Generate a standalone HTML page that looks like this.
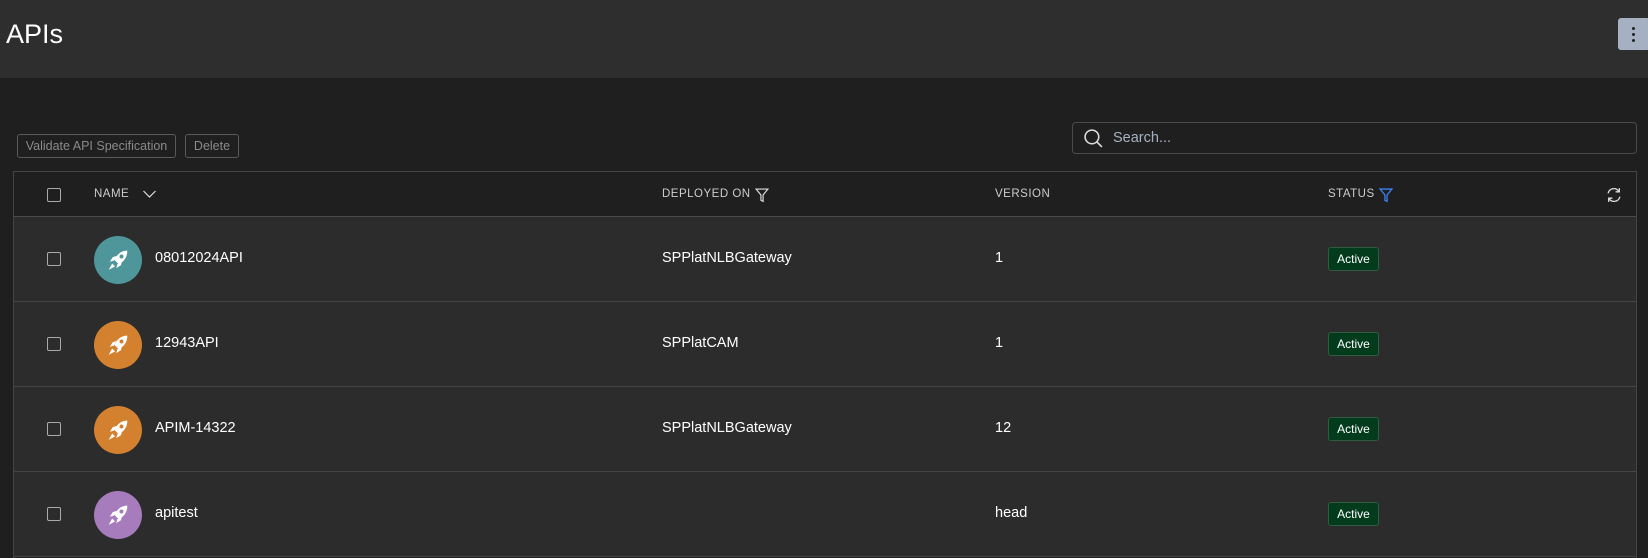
<!DOCTYPE html>
<html><head><style>
*{box-sizing:border-box;margin:0;padding:0}
html,body{width:1648px;height:558px;overflow:hidden}
body{background:#1f1f1f;font-family:"Liberation Sans","DejaVu Sans",sans-serif;color:#f0f0f0;position:relative}
.hdr{position:absolute;left:0;top:0;width:1648px;height:78px;background:#2e2e2e}
.hdr h1{position:absolute;left:6px;top:19px;font-size:27px;font-weight:400;color:#fff}
.kebab{position:absolute;left:1618px;top:18px;width:32px;height:32px;background:#a5b1c2;border-radius:3px}
.kebab i{position:absolute;left:14px;width:3px;height:3px;background:#222;border-radius:50%}
.btn{position:absolute;top:134px;height:24px;border:1px solid #5a5a5a;border-radius:3px;color:#8a8a8a;font-size:12.5px;line-height:22px;white-space:nowrap;text-align:center}
.search{position:absolute;left:1072px;top:122px;width:565px;height:32px;border:1px solid #4a4a4a;border-radius:4px}
.search span{position:absolute;left:40px;top:7px;font-size:14.5px;color:#a5b1c2}
.table{position:absolute;left:13px;top:171px;width:1624px;height:387px;border:1px solid #444;border-bottom:none;overflow:hidden}
.th{position:absolute;left:0;top:0;width:100%;height:45px;background:#1f1f1f;border-bottom:1px solid #4a4a4a}
.th span{position:absolute;top:16px;font-size:11.5px;color:#ccc;letter-spacing:.5px}
.row{position:absolute;left:0;width:100%;height:85px;background:#2c2c2c;border-bottom:1px solid #444}
.cb{position:absolute;left:33px;width:14px;height:14px;border:1px solid #aaa;border-radius:2px}
.row .cb{top:35px}
.av{position:absolute;left:80px;top:19px;width:48px;height:48px;border-radius:50%}
.av svg{position:absolute;left:10px;top:10px}
.t{position:absolute;top:33px;font-size:14.5px;color:#fff}
.badge{position:absolute;left:1314px;top:30px;width:51px;height:24px;background:#033b1d;border:1px solid #2f5c3f;border-radius:3px;font-size:12px;line-height:22px;text-align:center;color:#fff}
</style></head><body>
<div class="hdr"><h1>APIs</h1><div class="kebab"><i style="top:9px"></i><i style="top:15px"></i><i style="top:21px"></i></div></div>
<div class="btn" style="left:17px;width:159px">Validate API Specification</div>
<div class="btn" style="left:185px;width:54px">Delete</div>
<div class="search"><svg style="position:absolute;left:10px;top:5px" width="21" height="21" viewBox="0 0 20 20"><circle cx="8.5" cy="8.5" r="6.5" fill="none" stroke="#ddd" stroke-width="1.5"/><path d="M13 13l5 5" stroke="#ddd" stroke-width="1.5"/></svg><span>Search...</span></div>
<div class="table">
<div class="th"><div class="cb" style="top:16px"></div>
<span style="left:80px">NAME</span><svg style="position:absolute;left:128px;top:18px" width="15" height="9" viewBox="0 0 14 9"><path d="M1 1l6 6 6-6" fill="none" stroke="#ddd" stroke-width="1.2"/></svg>
<span style="left:648px">DEPLOYED ON</span><svg style="position:absolute;left:741px;top:16px" width="14" height="15" viewBox="0 0 13 14"><path d="M1 1h11l-4.5 5.5v6l-2-1v-5z" fill="none" stroke="#ddd" stroke-width="1.1"/></svg>
<span style="left:981px">VERSION</span>
<span style="left:1314px">STATUS</span><svg style="position:absolute;left:1365px;top:16px" width="14" height="15" viewBox="0 0 13 14"><path d="M1 1h11l-4.5 5.5v6l-2-1v-5z" fill="none" stroke="#3b82f6" stroke-width="1.2"/></svg>
<svg style="position:absolute;left:1592px;top:15px" width="16" height="16" viewBox="0 0 15 15"><path d="M2 6a5.5 5.5 0 0 1 10-2M13 9a5.5 5.5 0 0 1-10 2" fill="none" stroke="#ddd" stroke-width="1.2"/><path d="M12.5 1v3.5H9M2.5 14v-3.5H6" fill="none" stroke="#ddd" stroke-width="1.2"/></svg>
</div>
<div class="row" style="top:45px"><div class="cb"></div><div class="av" style="background:#4f969b"><svg width="28" height="28" viewBox="0 0 24 24"><path d="M20 4c-5 0-9 3-11 8l3.5 3.5c5-2 7.5-6.5 7.5-11.5z M8.5 12.5l-3.5 1 2.5-4 3.5-1z M11.5 15.5l-1 3.5 4-2.5 1-3.5z M4 20.5l3-5.5 2.5 2.5z" fill="#fff"/><circle cx="15" cy="9" r="1.7" fill="#4f969b"/></svg></div><div class="t" style="left:141px">08012024API</div><div class="t" style="left:648px">SPPlatNLBGateway</div><div class="t" style="left:981px">1</div><div class="badge">Active</div></div>
<div class="row" style="top:130px"><div class="cb"></div><div class="av" style="background:#d4812f"><svg width="28" height="28" viewBox="0 0 24 24"><path d="M20 4c-5 0-9 3-11 8l3.5 3.5c5-2 7.5-6.5 7.5-11.5z M8.5 12.5l-3.5 1 2.5-4 3.5-1z M11.5 15.5l-1 3.5 4-2.5 1-3.5z M4 20.5l3-5.5 2.5 2.5z" fill="#fff"/><circle cx="15" cy="9" r="1.7" fill="#d4812f"/></svg></div><div class="t" style="left:141px">12943API</div><div class="t" style="left:648px">SPPlatCAM</div><div class="t" style="left:981px">1</div><div class="badge">Active</div></div>
<div class="row" style="top:215px"><div class="cb"></div><div class="av" style="background:#d4812f"><svg width="28" height="28" viewBox="0 0 24 24"><path d="M20 4c-5 0-9 3-11 8l3.5 3.5c5-2 7.5-6.5 7.5-11.5z M8.5 12.5l-3.5 1 2.5-4 3.5-1z M11.5 15.5l-1 3.5 4-2.5 1-3.5z M4 20.5l3-5.5 2.5 2.5z" fill="#fff"/><circle cx="15" cy="9" r="1.7" fill="#d4812f"/></svg></div><div class="t" style="left:141px">APIM-14322</div><div class="t" style="left:648px">SPPlatNLBGateway</div><div class="t" style="left:981px">12</div><div class="badge">Active</div></div>
<div class="row" style="top:300px"><div class="cb"></div><div class="av" style="background:#a67cbd"><svg width="28" height="28" viewBox="0 0 24 24"><path d="M20 4c-5 0-9 3-11 8l3.5 3.5c5-2 7.5-6.5 7.5-11.5z M8.5 12.5l-3.5 1 2.5-4 3.5-1z M11.5 15.5l-1 3.5 4-2.5 1-3.5z M4 20.5l3-5.5 2.5 2.5z" fill="#fff"/><circle cx="15" cy="9" r="1.7" fill="#a67cbd"/></svg></div><div class="t" style="left:141px">apitest</div><div class="t" style="left:981px">head</div><div class="badge">Active</div></div>
</div>
</body></html>
